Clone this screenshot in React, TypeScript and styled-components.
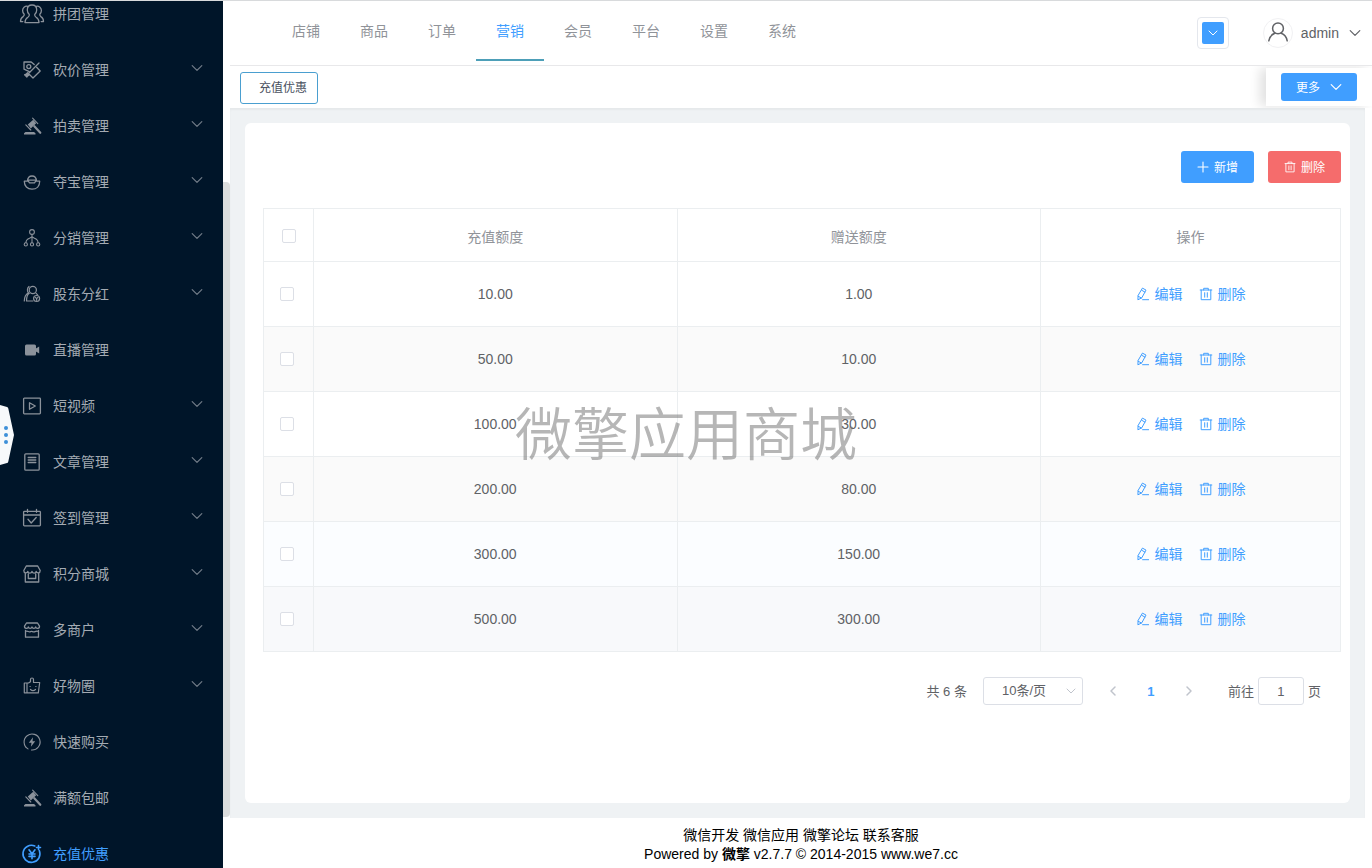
import React from "react";
import styled, { createGlobalStyle, css } from "styled-components";

const GlobalStyle = createGlobalStyle`
  *, *::before, *::after { box-sizing: border-box; }
  body {
    margin: 0;
    background: #fff;
    color: #606266;
    font-family: "Liberation Sans", "Noto Sans CJK SC", sans-serif;
    font-size: 14px;
  }
  button, input, select { font-family: inherit; margin: 0; }
  button { cursor: pointer; }
  a { text-decoration: none; }
`;

/* ---------- icons ---------- */

const Svg = styled.svg`
  display: block;
  flex: none;
  fill: none;
  stroke: currentColor;
  stroke-width: 1.3;
  stroke-linecap: round;
  stroke-linejoin: round;
`;

const Gavel = () => (
  <g>
    <path d="M5.800 8.600 11.200 3.800 14.200 7.200 8.800 12.400z" fill="currentColor" stroke="none" />
    <path d="m3.800 8.800 5 5.200M10.600 2.200l5.200 5.400" strokeWidth="1.100" />
    <path d="m12.300 10.200 6 6.600" strokeWidth="2.200" />
    <path d="M2 18.400v-1.200l1.500-1.200h8.500l1.500 1.200v1.200z" fill="currentColor" stroke="none" />
  </g>
);

const menuIcons: Record<string, React.ReactNode> = {
  group: (
    <>
      <path d="M10 1c-3 0-4.700 2.200-4.700 4.900 0 2 .9 3.600 2 4.600.3 1.400-.3 2-1.400 2.700C3.800 14.400 3 15.300 3 18.600h14c0-3.300-.8-4.200-2.900-5.400-1.100-.7-1.700-1.300-1.400-2.700 1.100-1 2-2.600 2-4.600C14.700 3.200 13 1 10 1z" />
      <path d="M5.800 2.300C2.800 1.700.6 3.800.6 6.500c0 1.700.7 2.900 1.600 3.800.3 1-.1 1.600-1.100 2.300C-.8 13.800-1.500 14.500-1.500 17.600H.8M14.200 2.300c3-.6 5.200 1.500 5.200 4.200 0 1.700-.7 2.900-1.600 3.800-.3 1 .1 1.600 1.100 2.300 1.900 1.200 2.600 1.900 2.600 5h-2.300" />
    </>
  ),
  cut: (
    <>
      <path d="M7.800 11.800 2 9.200V2h7.200l3 2.500M14.600 7.200 18.200 11 11 18l-3.800-3.800" />
      <circle cx="6.800" cy="6.600" r="2" />
      <path d="M17 3 4.500 15.500M2.600 14.800l2.300 2.300M5.600 12.800l1.800 1.800-2.600 2.200-1.800-1.800z" />
    </>
  ),
  gavel: <Gavel />,
  bowl: (
    <path d="M2.300 9.200h4l1.200 1.600h5l1.200-1.600h4c0 4.800-3 8-7.700 8s-7.700-3.200-7.700-8zM5.400 9C5.700 5.800 7.300 4 10 4s4.300 1.800 4.600 5M6.500 8.200h7" />
  ),
  tree: (
    <g strokeWidth="1.1">
      <circle cx="10" cy="4" r="2.400" />
      <path d="M10 6.500v8.300M4 14.500c0-2.600 1.500-3.600 3.500-4.300L10 8.800l2.500 1.400c2 .7 3.500 1.700 3.500 4.300" />
      <circle cx="3.800" cy="16.400" r="1.600" />
      <circle cx="10" cy="16.400" r="1.600" />
      <circle cx="16.200" cy="16.400" r="1.600" />
    </g>
  ),
  shareholder: (
    <g strokeWidth="1.200">
      <circle cx="10.800" cy="6" r="3.600" />
      <path d="M7.300 9.200C5 10.500 4.500 13 4.500 17h6.300M14 9.200l1.600 1.600M7 2.500C5 4 5 7.500 6.500 8.700 3.800 10.300 2.300 13 2.300 17" />
      <circle cx="14.600" cy="14.500" r="3" />
      <path d="m13.300 13.300 1.300 1.400 1.300-1.400M14.600 14.700v1.600" />
    </g>
  ),
  video: (
    <g fill="currentColor" stroke="none">
      <rect x="3" y="4.500" width="11" height="11" rx="1.500" />
      <path d="m13 9 4.200-2.500v7L13 11z" />
    </g>
  ),
  play: (
    <>
      <rect x="1.600" y="2.200" width="16.800" height="15.600" rx=".8" />
      <path d="M7.500 6.700v6.600l5.800-3.300z" />
    </>
  ),
  article: (
    <>
      <rect x="2.800" y="1.800" width="14.400" height="16.400" rx="1" />
      <path d="M6.200 5.500h7.600M6.200 8h7.600M6.200 10.500h7.600" />
    </>
  ),
  checkin: (
    <>
      <rect x="1.600" y="3.400" width="16.800" height="14.400" rx=".8" />
      <path d="M1.600 7h16.800M5.500 1.300v3M14.500 1.300v3M6 11.300l3.200 3.700 5-5.500" />
    </>
  ),
  mall: (
    <path d="M4.300 2h11.400l2.500 4.500c0 3.100-3.400 3.100-4 .8-.5 2.300-3.600 2.300-4.200 0-.6 2.300-3.700 2.300-4.200 0-.6 2.300-4 2.300-4-.8zM3.300 9v9h13.400V9M6.300 10v4.500h7.400V10" />
  ),
  shops: (
    <path d="M4.500 3h11l2 3.200c.2 2.600-3.500 2.700-3.800.8-.5 1.800-3.200 1.800-3.700 0-.5 1.800-3.200 1.800-3.700 0-.3 1.900-4 1.800-3.800-.8zM3.500 10.500v6.700h13v-6.700M3.500 11.500c2.200-1.500 3.200 1.500 5.200 0 1.300-.8 2.200.9 3.600.3 1.500-.6 2.500-1.300 4.200-.3" />
  ),
  goods: (
    <g strokeWidth="1.200">
      <path d="M2.300 7h4.200l2-1.300V3.500c0-2 3-2 3 0v3h6.200l-1.400 10.300H2.300zM5 7.500v9" />
      <path d="M8 10.500h.2M13.800 10.500h.2M8.500 13.500c1.400 1.200 3.600 1.200 5 0" />
    </g>
  ),
  flash: (
    <>
      <path d="M6 16.900A8 8 0 1 1 9.500 18M4 15.300l-.6-.7" strokeWidth="1.100" />
      <path d="M11 5.200 6.800 10.700h2.700l-.6 4.100 4.300-5.600h-2.700z" fill="currentColor" stroke="none" />
    </>
  ),
  yuan: (
    <g strokeWidth="1.600">
      <path d="M17.300 6.500A8.500 8.500 0 1 1 12.800 2M16.500 1.500v4M14.500 3.500h4" />
      <path d="m7 5.800 3 4 3-4M10 9.800v5M7 10h6M7 12.400h6" />
    </g>
  ),
};

const Chevron = ({ size = 12, dir = "down" }: { size?: number; dir?: "down" | "left" | "right" }) => (
  <Svg width={size} height={size} viewBox="0 0 12 12" aria-hidden>
    <path
      d={dir === "down" ? "M1.200 3.600 6 8.400l4.800-4.800" : dir === "left" ? "M8 2 4 6l4 4" : "m4 2 4 4-4 4"}
      strokeWidth={dir === "down" ? 1.200 : 1.500}
    />
  </Svg>
);

const EditIcon = () => (
  <Svg width="14" height="14" viewBox="0 0 14 14" aria-hidden>
    <path
      strokeWidth="1"
      d="M6.800 1.300 10 3.100 5.800 10.800l-3.900 2 .2-4zM5.800 3.300 8.900 5.100M2.100 9.200l3.300 1.800M6.600 12.700h6"
    />
  </Svg>
);

const TrashIcon = ({ size = 14 }: { size?: number }) => (
  <Svg width={size} height={size} viewBox="0 0 14 14" aria-hidden>
    <path strokeWidth="1" d="M1.200 3h11.600M4.700 3V1.300h4.600V3M2.200 3v9.700h9.600V3M5.700 5.700v4.500M8.300 5.700v4.500" />
  </Svg>
);

const PlusIcon = () => (
  <Svg width="12" height="12" viewBox="0 0 12 12" aria-hidden>
    <path strokeWidth="1.100" d="M6 1v10M1 6h10" />
  </Svg>
);

/* Text beside an icon; the bottom padding centres CJK glyphs optically. */
const Label = styled.span`
  padding-bottom: 2px;
`;

/* ---------- page frame ---------- */

const Page = styled.div`
  display: grid;
  grid-template-columns: 223px 7px minmax(0, 1fr);
  min-height: 100vh;
  border-top: 1px solid #d8dadc;
`;

const Sidebar = styled.nav`
  height: calc(100vh - 1px);
  overflow: hidden;
  background: #001529;
`;

const MenuList = styled.ul`
  list-style: none;
  margin: -15px 0 0;
  padding: 0;
`;

const MenuLink = styled.a<{ $active?: boolean }>`
  display: flex;
  align-items: center;
  height: 56px;
  padding: 0 20px 0 22px;
  gap: 11px;
  color: ${(p) => (p.$active ? "#409eff" : "#a4abb3")};
  svg { overflow: visible; }
`;

const MenuGlyph = styled.span<{ $active?: boolean }>`
  color: ${(p) => (p.$active ? "#409eff" : "#8b929b")};
`;

const MenuText = styled(Label)`
  flex: 1;
`;

const MenuArrow = styled.span`
  color: #717c88;
  padding-bottom: 4px;
`;

const ScrollTrack = styled.div`
  display: grid;
  grid-template-rows: 181fr 635fr 51fr;
  height: calc(100vh - 1px);
`;

const ScrollThumb = styled.div`
  grid-row: 2;
  background: #dcdddd;
  border-radius: 0 4px 4px 0;
`;

const DrawerHandle = styled.button`
  position: fixed;
  left: 0;
  top: calc(50vh - 29px);
  padding: 0;
  border: 0;
  background: none;
`;

const Column = styled.div`
  display: flex;
  flex-direction: column;
  min-width: 0;
`;

/* ---------- header ---------- */

const Header = styled.header`
  display: flex;
  align-items: stretch;
  justify-content: space-between;
  height: 65px;
  padding: 0 11px 0 42px;
  border-bottom: 1px solid #e8e8ea;
`;

const TopNav = styled.nav`
  display: flex;
  height: 60px;
`;

const TopLink = styled.a<{ $active?: boolean }>`
  padding: 0 20px;
  line-height: 60px;
  color: ${(p) => (p.$active ? "#409eff" : "#909399")};
  border-bottom: 2px solid ${(p) => (p.$active ? "#4d9fb8" : "transparent")};
`;

const HeaderTools = styled.div`
  display: flex;
  align-items: center;
`;

const SwitchFrame = styled.div`
  padding: 4px;
  margin-right: 34px;
  border: 1px solid #e4e7ed;
  border-radius: 4px;
`;

const SwitchButton = styled.button`
  display: grid;
  place-items: center;
  width: 22px;
  height: 22px;
  padding: 0;
  border: 0;
  border-radius: 2px;
  background: #409eff;
  color: #fff;
`;

const UserButton = styled.button`
  display: flex;
  align-items: center;
  padding: 0;
  border: 0;
  background: none;
  font-size: 14px;
  color: #606266;
`;

const Avatar = styled.span`
  display: grid;
  place-items: center;
  width: 30px;
  height: 30px;
  margin-right: 8px;
  border: 1px solid #f1f1f3;
  border-radius: 50%;
`;

const UserName = styled.span`
  margin-right: 10px;
`;

const TabBar = styled.div`
  display: flex;
  align-items: center;
  justify-content: space-between;
  height: 42px;
  padding-left: 10px;
  overflow: hidden;
`;

const PageTab = styled.a`
  height: 32px;
  margin-top: 2px;
  padding: 0 10px 0 18px;
  border: 1px solid #4a9fd0;
  border-radius: 3px;
  font-size: 12px;
  line-height: 30px;
  color: #495060;
`;

const MorePanel = styled.div`
  padding: 5px 15px;
  background: #fff;
  box-shadow: -6px 0 12px rgba(0, 0, 0, 0.12);
`;

const Button = styled.button<{ $tone?: "danger"; $small?: boolean }>`
  display: inline-flex;
  align-items: center;
  justify-content: center;
  gap: ${(p) => (p.$small ? 10 : 5)}px;
  height: ${(p) => (p.$small ? 28 : 32)}px;
  padding: 0 ${(p) => (p.$small ? 15 : 16)}px;
  border: 0;
  border-radius: 3px;
  background: ${(p) => (p.$tone === "danger" ? "#f56c6c" : "#409eff")};
  color: #fff;
  font-size: 12px;
`;

/* ---------- content ---------- */

const Canvas = styled.main`
  flex: 1;
  display: flex;
  margin-right: 7px;
  padding: 15px;
  background: #eff2f4;
  box-shadow: inset 0 2px 2px rgba(0, 0, 0, 0.04);
`;

const Card = styled.section`
  flex: 1;
  min-width: 0;
  padding: 28px 9px 28px 18px;
  border-radius: 6px;
  background: #fff;
`;

const Toolbar = styled.div`
  display: flex;
  justify-content: flex-end;
  gap: 14px;
  margin-bottom: 25px;
`;

const Table = styled.table`
  width: 100%;
  table-layout: fixed;
  border-collapse: separate;
  border-spacing: 0;
  border: solid #ebeef0;
  border-width: 1px 0 0 1px;
  text-align: center;
`;

const cell = css`
  padding: 0;
  border: solid #ebeef0;
  border-width: 0 1px 1px 0;
`;

const HeadCell = styled.th<{ $width?: number }>`
  ${cell}
  width: ${(p) => (p.$width ? `${p.$width}px` : "auto")};
  height: 53px;
  padding-top: 1px;
  font-weight: 400;
  color: #909399;
`;

const Row = styled.tr<{ $fill: string }>`
  background: ${(p) => p.$fill};
`;

const Cell = styled.td`
  ${cell}
  height: 65px;
`;

const CheckCell = styled(Cell)`
  padding-right: 4px;
`;

const Checkbox = styled.input.attrs({ type: "checkbox" })`
  appearance: none;
  display: block;
  width: 14px;
  height: 14px;
  margin: 0 auto;
  border: 1px solid #dcdfe6;
  border-radius: 2px;
  background: #fff;
  &:checked { background: #409eff; border-color: #409eff; }
`;

const Actions = styled.div`
  display: flex;
  justify-content: center;
  gap: 16px;
`;

const ActionLink = styled.a`
  display: flex;
  align-items: center;
  gap: 5px;
  color: #409eff;
`;

const Pager = styled.nav`
  display: flex;
  align-items: center;
  justify-content: flex-end;
  margin-top: 25px;
  padding-right: 20px;
  font-size: 13px;
`;

const SizeBox = styled.label`
  display: grid;
  align-items: center;
  width: 100px;
  margin: 0 11px 0 16px;
  color: #c0c4cc;
  > * { grid-area: 1 / 1; }
  > svg { justify-self: end; margin-right: 7px; pointer-events: none; }
`;

const SizeSelect = styled.select`
  appearance: none;
  width: 100%;
  height: 28px;
  padding: 0 18px 2px;
  border: 1px solid #dcdfe6;
  border-radius: 3px;
  background: #fff;
  color: #606266;
  font-size: 13px;
`;

const PageButton = styled.button<{ $active?: boolean }>`
  display: grid;
  place-items: center;
  width: 38px;
  height: 28px;
  padding: 0;
  border: 0;
  background: none;
  font-size: 13px;
  font-weight: 700;
  color: ${(p) => (p.$active ? "#409eff" : "#c0c4cc")};
`;

const Jump = styled.label`
  display: flex;
  align-items: center;
  gap: 4px;
  margin-left: 20px;
`;

const JumpInput = styled.input`
  width: 46px;
  height: 28px;
  padding: 0;
  border: 1px solid #dcdfe6;
  border-radius: 3px;
  text-align: center;
  font-size: 13px;
  color: #606266;
`;

const Footer = styled.footer`
  height: 50px;
  padding-top: 8px;
  text-align: center;
  line-height: 19px;
  color: #000;
  a { color: inherit; }
`;

const Watermark = styled.div`
  position: fixed;
  left: 50%;
  top: 50%;
  transform: translate(-50%, -50%);
  padding-bottom: 8px;
  font-family: "Noto Sans CJK SC", sans-serif;
  font-size: 57px;
  font-weight: 350;
  line-height: 1;
  white-space: nowrap;
  color: rgba(110, 110, 110, 0.5);
  pointer-events: none;
`;

/* ---------- data ---------- */

const menu = [
  { label: "拼团管理", icon: "group" },
  { label: "砍价管理", icon: "cut", sub: true },
  { label: "拍卖管理", icon: "gavel", sub: true },
  { label: "夺宝管理", icon: "bowl", sub: true },
  { label: "分销管理", icon: "tree", sub: true },
  { label: "股东分红", icon: "shareholder", sub: true },
  { label: "直播管理", icon: "video" },
  { label: "短视频", icon: "play", sub: true },
  { label: "文章管理", icon: "article", sub: true },
  { label: "签到管理", icon: "checkin", sub: true },
  { label: "积分商城", icon: "mall", sub: true },
  { label: "多商户", icon: "shops", sub: true },
  { label: "好物圈", icon: "goods", sub: true },
  { label: "快速购买", icon: "flash" },
  { label: "满额包邮", icon: "gavel" },
  { label: "充值优惠", icon: "yuan", active: true },
];

const topNav = ["店铺", "商品", "订单", "营销", "会员", "平台", "设置", "系统"];

const rows = [
  { amount: "10.00", bonus: "1.00", fill: "#fff" },
  { amount: "50.00", bonus: "10.00", fill: "#fafafa" },
  { amount: "100.00", bonus: "30.00", fill: "#fff" },
  { amount: "200.00", bonus: "80.00", fill: "#fafafa" },
  { amount: "300.00", bonus: "150.00", fill: "#fbfdff" },
  { amount: "500.00", bonus: "300.00", fill: "#f8f9fb" },
];

export default function App() {
  return (
    <>
      <GlobalStyle />
      <Page>
        <Sidebar aria-label="营销">
          <MenuList>
            {menu.map((m) => (
              <li key={m.label}>
                <MenuLink href="#" $active={m.active}>
                  <MenuGlyph $active={m.active}>
                    <Svg width="20" height="20" viewBox="0 0 20 20" aria-hidden>
                      {menuIcons[m.icon]}
                    </Svg>
                  </MenuGlyph>
                  <MenuText>{m.label}</MenuText>
                  {m.sub && (
                    <MenuArrow>
                      <Chevron />
                    </MenuArrow>
                  )}
                </MenuLink>
              </li>
            ))}
          </MenuList>
        </Sidebar>
        <ScrollTrack>
          <ScrollThumb />
        </ScrollTrack>
        <Column>
          <Header>
            <TopNav>
              {topNav.map((t) => (
                <TopLink key={t} href="#" $active={t === "营销"}>
                  {t}
                </TopLink>
              ))}
            </TopNav>
            <HeaderTools>
              <SwitchFrame>
                <SwitchButton aria-label="切换">
                  <Chevron size={10} />
                </SwitchButton>
              </SwitchFrame>
              <UserButton>
                <Avatar>
                  <Svg width="22" height="22" viewBox="0 0 22 22" aria-hidden>
                    <g strokeWidth="1.500">
                      <circle cx="11" cy="6.400" r="5.400" />
                      <path d="M1.800 18.800c.8-4.400 3.300-6.500 6-7.500M20.200 18.800c-.8-4.400-3.300-6.500-6-7.500" />
                    </g>
                  </Svg>
                </Avatar>
                <UserName>admin</UserName>
                <Chevron />
              </UserButton>
            </HeaderTools>
          </Header>
          <TabBar>
            <PageTab href="#">充值优惠</PageTab>
            <MorePanel>
              <Button $small>
                <Label>更多</Label>
                <Chevron />
              </Button>
            </MorePanel>
          </TabBar>
          <Canvas>
            <Card>
              <Toolbar>
                <Button>
                  <PlusIcon />
                  <Label>新增</Label>
                </Button>
                <Button $tone="danger">
                  <TrashIcon size={12} />
                  <Label>删除</Label>
                </Button>
              </Toolbar>
              <Table>
                <thead>
                  <tr>
                    <HeadCell $width={50}>
                      <Checkbox aria-label="全选" />
                    </HeadCell>
                    <HeadCell>充值额度</HeadCell>
                    <HeadCell>赠送额度</HeadCell>
                    <HeadCell $width={300}>操作</HeadCell>
                  </tr>
                </thead>
                <tbody>
                  {rows.map((r) => (
                    <Row key={r.amount} $fill={r.fill}>
                      <CheckCell>
                        <Checkbox aria-label={r.amount} />
                      </CheckCell>
                      <Cell>{r.amount}</Cell>
                      <Cell>{r.bonus}</Cell>
                      <Cell>
                        <Actions>
                          <ActionLink href="#">
                            <EditIcon />
                            <Label>编辑</Label>
                          </ActionLink>
                          <ActionLink href="#">
                            <TrashIcon />
                            <Label>删除</Label>
                          </ActionLink>
                        </Actions>
                      </Cell>
                    </Row>
                  ))}
                </tbody>
              </Table>
              <Pager aria-label="分页">
                <Label>共 6 条</Label>
                <SizeBox>
                  <SizeSelect aria-label="每页条数" defaultValue="10">
                    <option value="10">10条/页</option>
                  </SizeSelect>
                  <Chevron size={10} />
                </SizeBox>
                <PageButton aria-label="上一页">
                  <Chevron dir="left" />
                </PageButton>
                <PageButton $active>1</PageButton>
                <PageButton aria-label="下一页">
                  <Chevron dir="right" />
                </PageButton>
                <Jump>
                  <Label>前往</Label>
                  <JumpInput type="text" defaultValue="1" />
                  <Label>页</Label>
                </Jump>
              </Pager>
            </Card>
          </Canvas>
          <Footer>
            <div>
              <a href="#">微信开发</a> <a href="#">微信应用</a> <a href="#">微擎论坛</a> <a href="#">联系客服</a>
            </div>
            <div>
              Powered by <b>微擎</b> v2.7.7 © 2014-2015 www.we7.cc
            </div>
          </Footer>
        </Column>
      </Page>
      <DrawerHandle aria-label="展开">
        <svg width="14" height="60" viewBox="0 0 14 60">
          <path d="M0 0 7 2q1 0 1.300 1.500L14 30 8.300 56.500Q8 58 7 58L0 60z" fill="#f7f9fb" />
          <g fill="#3d8fd8">
            <circle cx="6" cy="23" r="2" />
            <circle cx="6" cy="30" r="2" />
            <circle cx="6" cy="37" r="2" />
          </g>
        </svg>
      </DrawerHandle>
      <Watermark aria-hidden>微擎应用商城</Watermark>
    </>
  );
}
